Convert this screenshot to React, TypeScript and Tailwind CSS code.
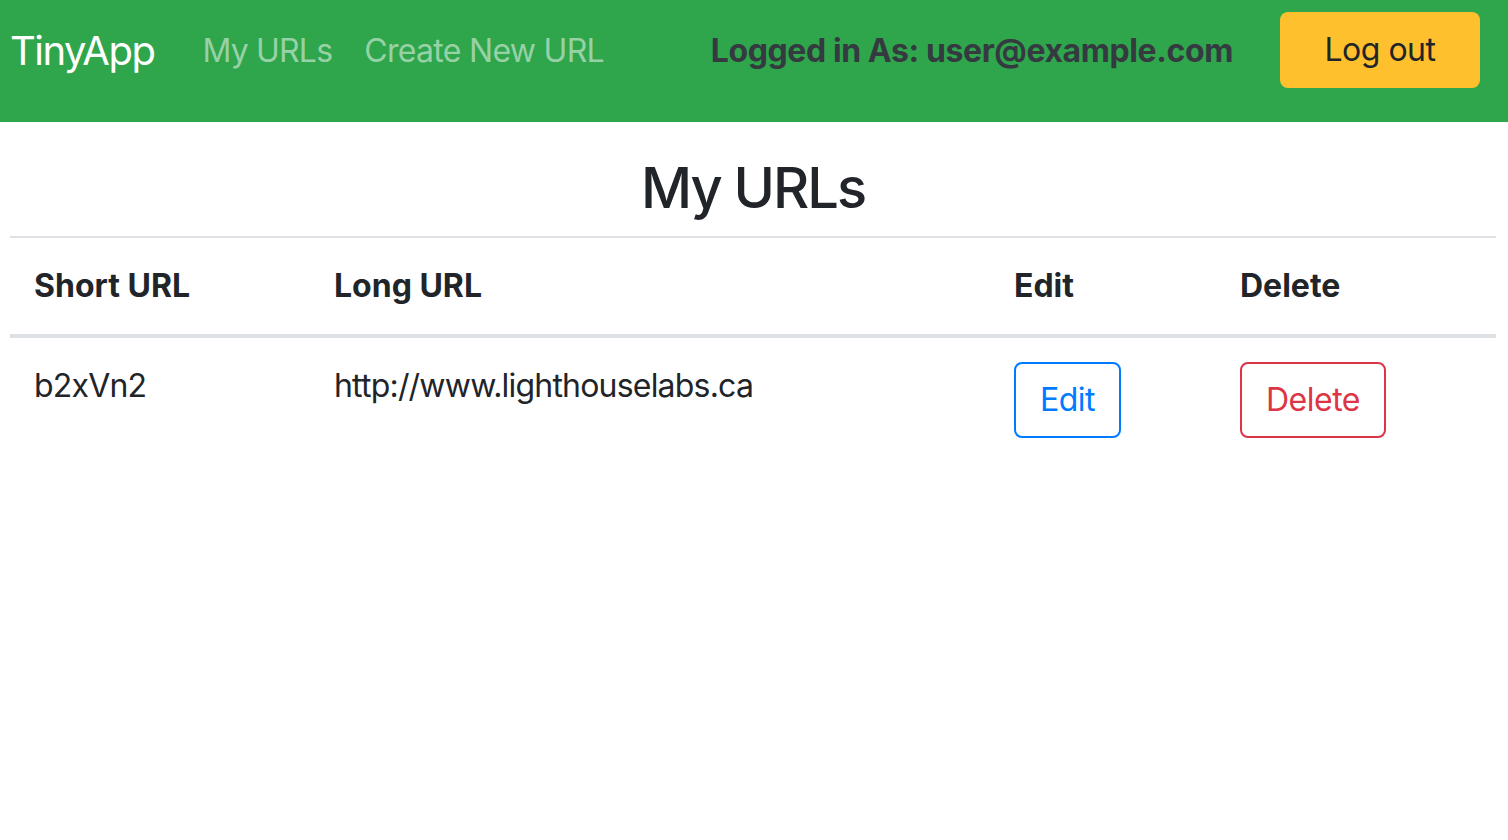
import React from "react";

export default function App() {
  return (
    <div className="min-h-[840px] bg-white text-[#212529]" style={{ fontFamily: "Inter, 'Noto Sans', sans-serif" }}>
      <nav className="h-[122px] bg-[#2fa54c] pl-[10px] pr-[28px] pt-[12px]">
        <div className="flex h-[76px] items-center">
          <span className="mr-[32px] mt-[2px] text-[40px] leading-[60px] tracking-[-1.5px] text-white">TinyApp</span>
          <a className="mt-[2px] px-[16px] text-[32px] leading-[48px] tracking-[-0.8px] text-[#97d2a6]">My URLs</a>
          <a className="mt-[2px] px-[16px] text-[32px] leading-[48px] tracking-[-0.7px] text-[#97d2a6]">Create New URL</a>
          <div className="ml-auto flex items-center">
            <span className="mr-[47px] mt-[2px] text-[32px] font-bold leading-[48px] tracking-[-0.4px] text-[#343a40]">Logged in As: user@example.com</span>
            <button className="h-[76px] w-[200px] rounded-[8px] bg-[#fec12d] text-[32px] leading-[48px] tracking-[-0.5px] text-[#212529]">Log out</button>
          </div>
        </div>
      </nav>
      <main className="pl-[10px] pr-[12px]">
        <h2 className="mb-[14px] pt-[33px] text-center text-[56px] font-medium leading-[67px] tracking-[-2px]">My URLs</h2>
        <table className="w-full border-collapse text-left text-[32px] leading-[48px]">
          <thead>
            <tr className="border-t-[2px] border-b-[4px] border-[#dee2e6]">
              <th className="w-[300px] p-[24px] font-bold">Short URL</th>
              <th className="w-[680px] p-[24px] font-bold">Long URL</th>
              <th className="w-[226px] p-[24px] font-bold">Edit</th>
              <th className="p-[24px] font-bold">Delete</th>
            </tr>
          </thead>
          <tbody>
            <tr>
              <td className="p-[24px] align-top tracking-[-0.8px]">b2xVn2</td>
              <td className="p-[24px] align-top tracking-[-0.8px]">http://www.lighthouselabs.ca</td>
              <td className="p-[24px] align-top">
                <button className="rounded-[8px] border-[2px] border-[#007bff] px-[24px] py-[12px] text-[32px] leading-[48px] tracking-[-0.5px] text-[#007bff]">Edit</button>
              </td>
              <td className="p-[24px] align-top">
                <button className="rounded-[8px] border-[2px] border-[#dc3545] px-[24px] py-[12px] text-[32px] leading-[48px] tracking-[-0.5px] text-[#dc3545]">Delete</button>
              </td>
            </tr>
          </tbody>
        </table>
      </main>
    </div>
  );
}
